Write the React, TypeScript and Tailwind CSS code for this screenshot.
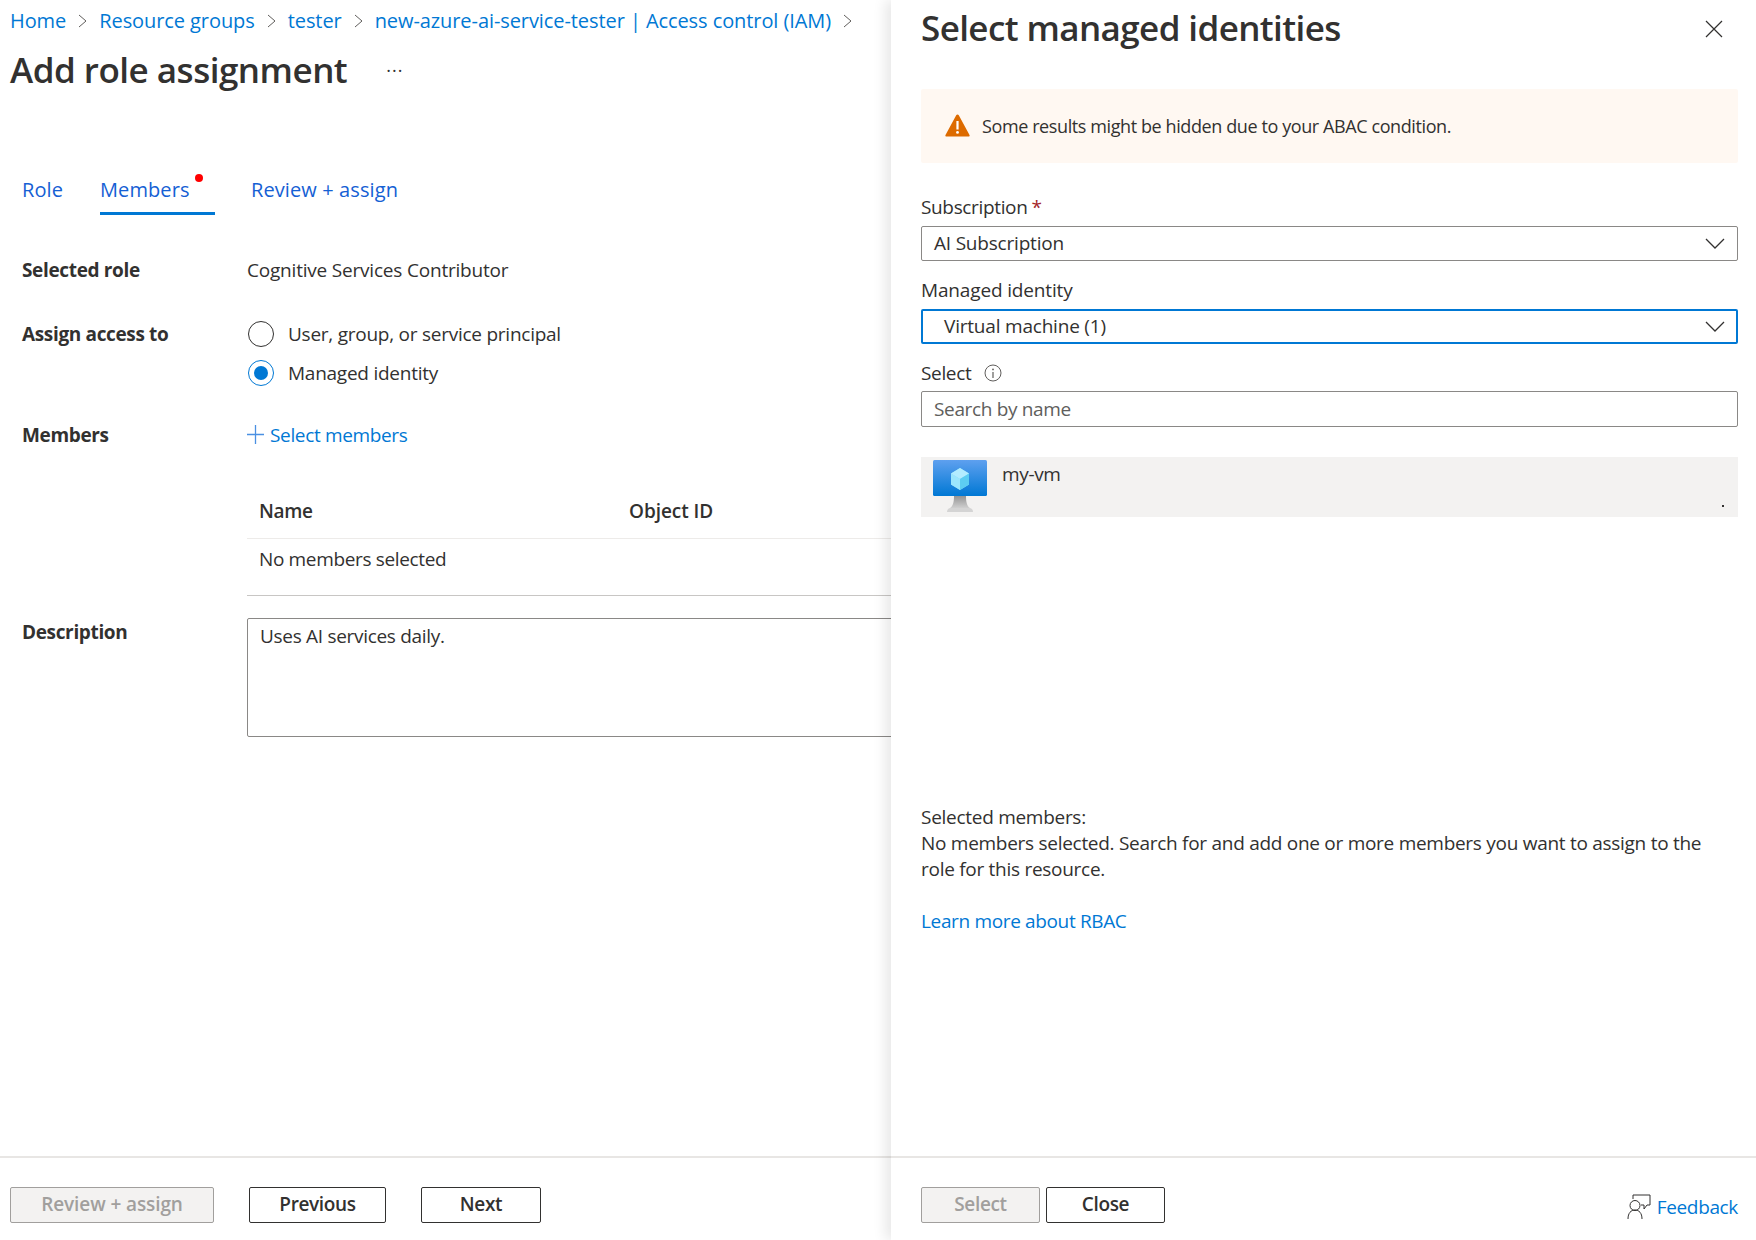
const font = "[font-family:'Open_Sans','Noto_Sans',sans-serif]"

function Chevron() {
  return (
    <svg width="9" height="14" viewBox="0 0 9 14" fill="none" className="shrink-0">
      <path d="M1 1l7 6-7 6" stroke="#605e5c" strokeWidth="1" />
    </svg>
  )
}

function SelectChevron() {
  return (
    <svg width="20" height="11" viewBox="0 0 20 11" fill="none">
      <path d="M1 1l9 9 9-9" stroke="#323130" strokeWidth="1.3" />
    </svg>
  )
}

function WarningIcon() {
  return (
    <svg width="25" height="23" viewBox="0 0 25 23" className="shrink-0">
      <path d="M12.5 0.5c.6 0 1 .3 1.3.8l10.7 19.6c.4.8 0 1.6-.9 1.6H1.4c-.9 0-1.3-.8-.9-1.6L11.2 1.3c.3-.5.7-.8 1.3-.8z" fill="#dd6b00" />
      <rect x="11.4" y="7" width="2.2" height="8.5" fill="#fff" />
      <circle cx="12.5" cy="18.4" r="1.4" fill="#fff" />
    </svg>
  )
}

function VmIcon() {
  return (
    <svg width="54" height="52" viewBox="0 0 54 52">
      <defs>
        <linearGradient id="screen" x1="0" y1="0" x2="0" y2="1">
          <stop offset="0" stopColor="#5ea0ef" />
          <stop offset="1" stopColor="#0078d4" />
        </linearGradient>
        <linearGradient id="stand" x1="0" y1="0" x2="0" y2="1">
          <stop offset="0" stopColor="#949494" />
          <stop offset="1" stopColor="#cfcfcf" />
        </linearGradient>
      </defs>
      <path d="M21 36h12c0 6 1 10 4 12H17c3-2 4-6 4-12z" fill="url(#stand)" />
      <path d="M14 52c0-3 2-4 4-4h18c2 0 4 1 4 4z" fill="#d4d4d4" />
      <rect x="0" y="0" width="54" height="36" rx="1.5" fill="url(#screen)" />
      <path d="M27 8l9 5.5v11L27 30l-9-5.5v-11z" fill="#83d9f7" />
      <path d="M27 8l9 5.5-9 5.5-9-5.5z" fill="#b3ecff" />
      <path d="M27 19l9-5.5v11L27 30z" fill="#5ccdf2" />
      <path d="M18 13.5l9 5.5v11l-9-5.5z" fill="#9ce6fd" />
    </svg>
  )
}

function FeedbackIcon() {
  return (
    <svg width="24" height="26" viewBox="0 0 24 26" fill="none" stroke="#323130" strokeWidth="1" className="shrink-0">
      <path d="M6 5V1h17v10h-3l-3 4v-4h-3" />
      <circle cx="8" cy="11.5" r="5" />
      <path d="M1 25c0-6 3-9 7-9s7 3 7 9" />
    </svg>
  )
}

function Breadcrumbs() {
  const crumbs = ['Home', 'Resource groups', 'tester', 'new-azure-ai-service-tester | Access control (IAM)']
  return (
    <div className="flex h-[40px] items-center pl-[10px] pt-[1px] text-[20px] tracking-[-0.08px] text-[#0078d4]">
      {crumbs.map((c) => (
        <div key={c} className="flex items-center">
          <span>{c}</span>
          <span className="mx-[12px]">
            <Chevron />
          </span>
        </div>
      ))}
    </div>
  )
}

function Radio({ checked, label }: { checked?: boolean; label: string }) {
  return (
    <div className="flex h-[30px] items-center">
      <span
        className={`ml-[1px] flex h-[26px] w-[26px] items-center justify-center rounded-full border bg-white ${
          checked ? 'border-[#0078d4]' : 'border-[#323130]'
        }`}
      >
        {checked && <span className="h-[14px] w-[14px] rounded-full bg-[#0078d4]" />}
      </span>
      <span className="ml-[14px] tracking-[-0.25px]">{label}</span>
    </div>
  )
}

function LeftPane() {
  return (
    <div className="flex h-full w-[891px] shrink-0 flex-col overflow-hidden">
      <Breadcrumbs />
      <div className="flex h-[60px] items-center pl-[10px]">
        <h1 className="text-[35px] font-semibold tracking-[-0.5px]">Add role assignment</h1>
        <span className="ml-[39px] text-[18px] leading-none tracking-[1px]">···</span>
      </div>

      <div className="mt-[70px] flex h-[45px] pl-[22px] text-[20px] tracking-[0.1px] text-[#1560d4]">
        <div className="w-[78px] pt-[5px]">Role</div>
        <div className="relative w-[115px] border-b-[3px] border-[#0078d4] pt-[5px] font-medium">
          Members
          <span className="absolute left-[95px] top-[4px] h-[8px] w-[8px] rounded-full bg-[#f00]" />
        </div>
        <div className="ml-[36px] pt-[5px]">Review + assign</div>
      </div>

      <div className="mt-[40px] flex h-[30px] items-center pl-[22px]">
        <div className="w-[225px] font-bold">Selected role</div>
        <div className="tracking-[-0.2px]">Cognitive Services Contributor</div>
      </div>

      <div className="mt-[34px] flex pl-[22px]">
        <div className="flex h-[30px] w-[225px] items-center font-bold">Assign access to</div>
        <div className="flex flex-col gap-[9px]">
          <Radio label="User, group, or service principal" />
          <Radio checked label="Managed identity" />
        </div>
      </div>

      <div className="mt-[32px] flex h-[30px] items-center pl-[22px]">
        <div className="w-[225px] font-bold">Members</div>
        <div className="flex items-center text-[#0078d4]">
          <svg width="17" height="19" viewBox="0 0 17 19" fill="none" stroke="#4a90e2" strokeWidth="1.3" className="mb-[2px]">
            <path d="M8.5 0v19M0 9.5h17" />
          </svg>
          <span className="ml-[6px]">Select members</span>
        </div>
      </div>

      <div className="ml-[247px] mt-[46px] w-[800px]">
        <div className="flex h-[43px] border-b border-[#edebe9] pb-[11px] pl-[12px] font-semibold">
          <div className="flex w-[370px] items-center">Name</div>
          <div className="flex items-center tracking-[-0.05px]">Object ID</div>
        </div>
        <div className="h-[57px] border-b border-[#c8c6c4] pl-[12px] pt-[5px] leading-[30px]">No members selected</div>
      </div>

      <div className="mt-[22px] flex pl-[22px]">
        <div className="-mt-[2px] w-[225px] shrink-0 pt-[1px] font-bold leading-[30px]">Description</div>
        <div className="h-[119px] w-[800px] shrink-0 rounded-[2px] border border-[#8a8886] px-[12px] pt-[2px] leading-[30px] tracking-[-0.3px]">
          Uses AI services daily.
        </div>
      </div>

      <div className="mt-auto flex h-[84px] shrink-0 border-t-2 border-[#e8e6e4] pl-[10px] pt-[29px] font-semibold">
        <button className="h-[36px] w-[204px] rounded-[2px] border border-[#a19f9d] bg-[#f3f2f1] pb-[2px] tracking-[-0.1px] text-[#a19f9d]">Review + assign</button>
        <button className="ml-[35px] h-[36px] w-[137px] rounded-[2px] border border-[#323130] bg-white pb-[2px]">Previous</button>
        <button className="ml-[35px] h-[36px] w-[120px] rounded-[2px] border border-[#323130] bg-white pb-[2px]">Next</button>
      </div>
    </div>
  )
}

function RightPane() {
  return (
    <div className="flex h-full flex-1 flex-col bg-white shadow-[-6px_0_12px_rgba(0,0,0,0.09)]">
      <div className="flex flex-1 flex-col pl-[30px] pr-[18px]">
        <div className="flex h-[56px] items-center justify-between">
          <h2 className="text-[35px] font-semibold tracking-[-0.6px]">Select managed identities</h2>
          <svg width="18" height="18" viewBox="0 0 18 18" fill="none" stroke="#323130" strokeWidth="1.2" className="mr-[15px] mt-[2px]">
            <path d="M1 1l16 16M17 1L1 17" />
          </svg>
        </div>

        <div className="mt-[33px] flex h-[74px] items-center rounded-[2px] bg-[#fff8f2] pl-[24px]">
          <span className="mb-[2px] flex">
            <WarningIcon />
          </span>
          <span className="ml-[12px] text-[18px] tracking-[-0.4px]">Some results might be hidden due to your ABAC condition.</span>
        </div>

        <div className="mt-[31px] flex h-[26px] items-center">
          Subscription<span className="ml-[4px] text-[#a4262c]">*</span>
        </div>
        <div className="mt-[6px] flex h-[35px] items-center justify-between rounded-[2px] border border-[#8a8886] pl-[12px] pr-[12px] tracking-[-0.2px]">
          AI Subscription
          <SelectChevron />
        </div>

        <div className="mt-[16px] flex h-[26px] items-center tracking-[-0.15px]">Managed identity</div>
        <div className="mt-[6px] flex h-[35px] items-center justify-between rounded-[2px] border-2 border-[#0078d4] pl-[21px] pr-[11px] tracking-[-0.2px]">
          Virtual machine (1)
          <SelectChevron />
        </div>

        <div className="mt-[16px] flex h-[26px] items-center">
          Select
          <svg width="18" height="18" viewBox="0 0 18 18" fill="none" className="ml-[13px]">
            <circle cx="9" cy="9" r="8" stroke="#605e5c" strokeWidth="1" />
            <path d="M9 8v6" stroke="#605e5c" strokeWidth="1.2" />
            <circle cx="9" cy="5.4" r="0.9" fill="#605e5c" />
          </svg>
        </div>
        <div className="mt-[5px] flex h-[36px] items-center rounded-[2px] border border-[#8a8886] pl-[12px] text-[#605e5c]">Search by name</div>

        <div className="relative mt-[30px] flex h-[60px] bg-[#f3f2f1] pl-[12px] pt-[3px]">
          <VmIcon />
          <span className="ml-[15px] leading-[28px]">my-vm</span>
          <span className="absolute bottom-[10px] right-[14px] h-[2px] w-[2px] bg-[#323130]" />
        </div>

        <div className="mt-[287px] pr-[16px] leading-[26px] tracking-[-0.28px]">
          <p>Selected members:</p>
          <p>No members selected. Search for and add one or more members you want to assign to the role for this resource.</p>
        </div>
        <div className="mt-[26px] leading-[26px] text-[#0078d4]">Learn more about RBAC</div>
      </div>

      <div className="flex h-[84px] shrink-0 border-t-2 border-[#e8e6e4] pl-[30px] pr-[18px] pt-[29px]">
        <button className="h-[36px] w-[119px] rounded-[2px] border border-[#a19f9d] bg-[#f3f2f1] pb-[2px] font-semibold text-[#a19f9d]">Select</button>
        <button className="ml-[6px] h-[36px] w-[119px] rounded-[2px] border border-[#323130] bg-white pb-[2px] font-semibold">Close</button>
        <div className="ml-auto mt-[2px] flex h-[36px] items-center text-[#0078d4]">
          <FeedbackIcon />
          <span className="ml-[6px]">Feedback</span>
        </div>
      </div>
    </div>
  )
}

export default function App() {
  return (
    <div className={`flex h-[1240px] w-full overflow-hidden bg-white text-[19px] tracking-[-0.35px] text-[#323130] ${font}`}>
      <LeftPane />
      <RightPane />
    </div>
  )
}
